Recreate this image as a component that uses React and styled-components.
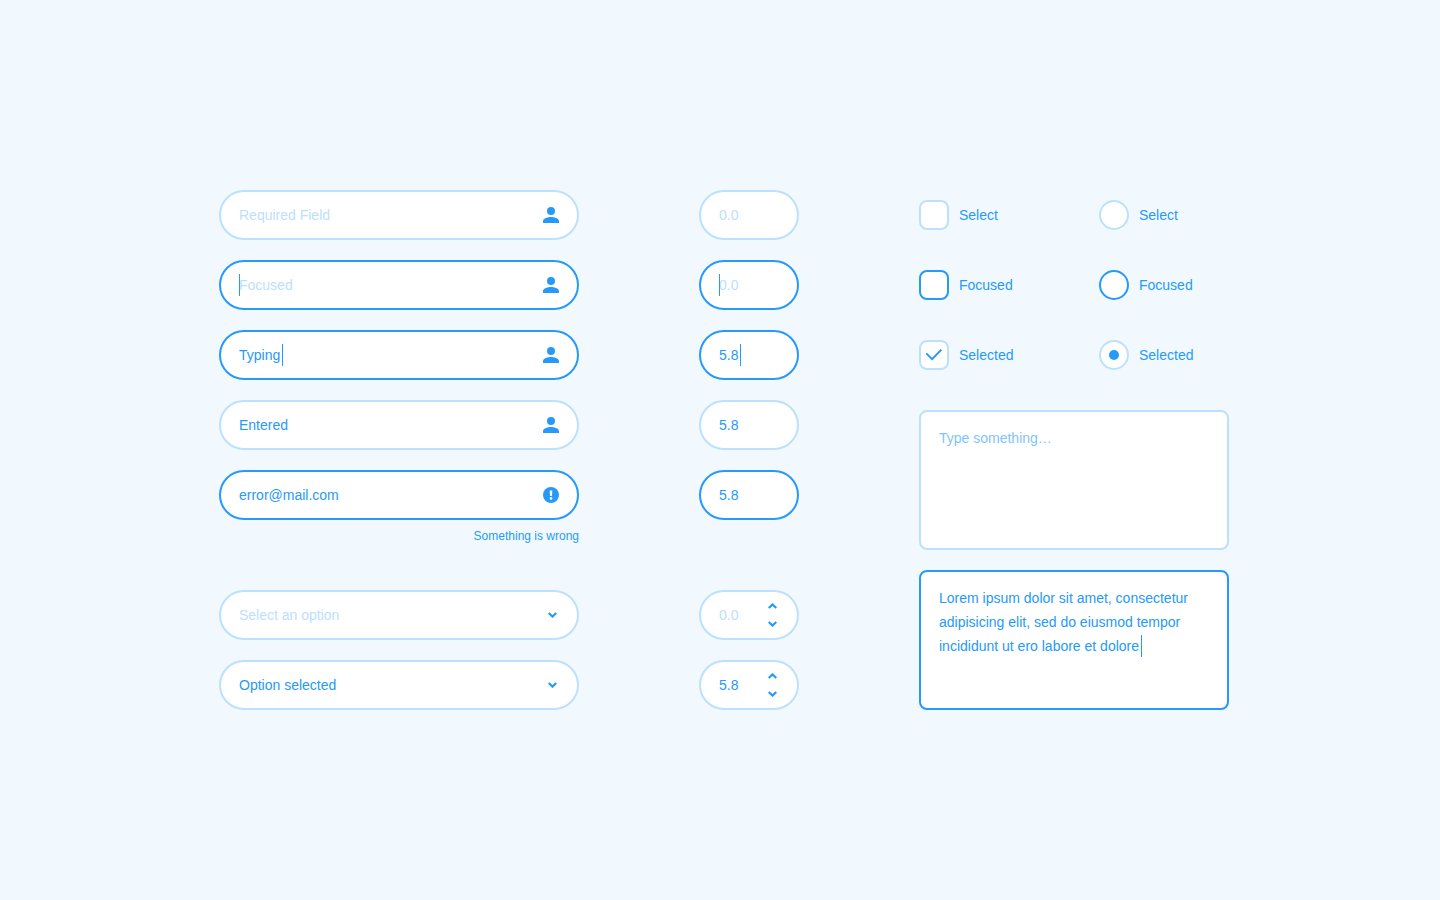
import React from 'react';
import styled, { createGlobalStyle, css } from 'styled-components';

const color = {
  page: '#f1f9ff',
  surface: '#ffffff',
  primary: '#2699fb',
  muted: '#bce0fd',
  hint: '#7fc4fd',
};

const GlobalStyle = createGlobalStyle`
  *, *::before, *::after { box-sizing: border-box; }
  body {
    margin: 0;
    background: ${color.page};
    color: ${color.primary};
    font: 14px/24px "Liberation Sans", Arial, sans-serif;
  }
  button, input, select, textarea { font: inherit; color: inherit; margin: 0; outline: none; }
`;

const Page = styled.main`
  min-height: 100vh;
  display: flex;
  align-items: center;
  justify-content: center;
  padding: 20px 20px 20px 28px;
`;

const Board = styled.form`
  display: grid;
  grid-template-columns: minmax(0, 360px) 100px minmax(0, 310px);
  column-gap: 120px;
  width: 100%;
  max-width: 1010px;
`;

const Column = styled.section`
  display: flex;
  flex-direction: column;
  justify-content: space-between;
  row-gap: 40px;
`;

const Stack = styled.div`
  display: flex;
  flex-direction: column;
  gap: 20px;
`;

const outline = css`
  background: ${color.surface};
  border: 2px solid ${({ $active }) => ($active ? color.primary : color.muted)};
`;

const Pill = styled.div`
  ${outline}
  position: relative;
  display: flex;
  align-items: center;
  height: 50px;
  padding: 0 18px;
  border-radius: 25px;
`;

const TextInput = styled.input`
  flex: 1;
  min-width: 0;
  height: 24px;
  padding: 0;
  border: 0;
  background: transparent;
  &::placeholder { color: ${color.muted}; opacity: 1; }
`;

const Caret = styled.span`
  position: absolute;
  top: ${({ $top }) => $top}px;
  left: ${({ $left }) => $left}px;
  width: 1px;
  height: 22px;
  background: ${color.primary};
`;

const Icon = styled.svg`
  display: block;
  flex: none;
`;

const ErrorText = styled.p`
  margin: -12px 0 0;
  font-size: 12px;
  line-height: 16px;
  text-align: right;
`;

const SelectPill = styled(Pill)`
  padding: 0;
`;

const Select = styled.select`
  appearance: none;
  width: 100%;
  height: 100%;
  padding: 0 36px 0 18px;
  border: 0;
  border-radius: 25px;
  background: transparent;
  color: ${({ $empty }) => ($empty ? color.muted : color.primary)};
`;

const SelectArrow = styled.span`
  position: absolute;
  top: 20px;
  right: 20px;
  pointer-events: none;
`;

const StepPill = styled(Pill)`
  padding-right: 20px;
`;

const Stepper = styled.div`
  display: flex;
  flex-direction: column;
  gap: 12px;
`;

const StepButton = styled.button`
  padding: 0;
  border: 0;
  background: transparent;
`;

const Options = styled.div`
  display: grid;
  grid-template-columns: 180px 1fr;
  row-gap: 40px;
  padding-top: 10px;
`;

const Option = styled.label`
  display: flex;
  align-items: center;
  gap: 10px;
  height: 30px;
`;

const Tick = styled.span`
  position: relative;
  display: flex;
`;

const Toggle = styled.input`
  ${outline}
  appearance: none;
  display: grid;
  place-items: center;
  width: 30px;
  height: 30px;
  border-radius: 8px;

  &[type='radio'] { border-radius: 50%; }
  &[type='radio']:checked::before {
    content: '';
    width: 10px;
    height: 10px;
    border-radius: 50%;
    background: ${color.primary};
  }
  & + svg { position: absolute; inset: 0; display: none; pointer-events: none; }
  &:checked + svg { display: block; }
`;

const AreaWrap = styled.div`
  position: relative;
  display: flex;
`;

const Area = styled.textarea`
  ${outline}
  width: 100%;
  height: 140px;
  padding: 14px 18px;
  border-radius: 8px;
  resize: none;
  &::placeholder { color: ${color.hint}; opacity: 1; }
`;

const PersonIcon = () => (
  <Icon width="16" height="16" viewBox="0 0 16 16" fill={color.primary} aria-hidden="true">
    <path d="M8 8a4 4 0 1 0 0-8 4 4 0 0 0 0 8zm0 2c-2.67 0-8 1.34-8 4v2h16v-2c0-2.66-5.33-4-8-4z" />
  </Icon>
);

const AlertIcon = () => (
  <Icon width="16" height="16" viewBox="0 0 16 16" aria-hidden="true">
    <circle cx="8" cy="8" r="8" fill={color.primary} />
    <path d="M6.7 3.6h2.6L9 9.1H7z" fill={color.surface} />
    <circle cx="8" cy="11.4" r="1.3" fill={color.surface} />
  </Icon>
);

const Chevron = ({ up }) => (
  <Icon width="9" height="6" viewBox="0 0 9 6" fill="none" stroke={color.primary} strokeWidth="2.2" aria-hidden="true">
    <path d={up ? 'M0.7 5 4.5 1.4 8.3 5' : 'M0.7 1 4.5 4.6 8.3 1'} />
  </Icon>
);

const CheckMark = () => (
  <svg width="30" height="30" viewBox="0 0 30 30" fill="none" stroke={color.primary} strokeWidth="2" aria-hidden="true">
    <path d="M7.3 13.4 13.1 19.1 22.4 9.6" />
  </svg>
);

const Field = ({ label, value, placeholder, active, caret, icon }) => (
  <Pill $active={active}>
    <TextInput aria-label={label} defaultValue={value} placeholder={placeholder} />
    {caret !== undefined && <Caret $top={12} $left={caret} />}
    {icon}
  </Pill>
);

const SelectField = ({ label, text, empty }) => (
  <SelectPill>
    <Select aria-label={label} $empty={empty}>
      <option>{text}</option>
    </Select>
    <SelectArrow><Chevron /></SelectArrow>
  </SelectPill>
);

const StepField = ({ label, value, placeholder }) => (
  <StepPill>
    <TextInput aria-label={label} inputMode="decimal" defaultValue={value} placeholder={placeholder} />
    <Stepper>
      <StepButton type="button" aria-label="Increase"><Chevron up /></StepButton>
      <StepButton type="button" aria-label="Decrease"><Chevron /></StepButton>
    </Stepper>
  </StepPill>
);

const options = [
  { text: 'Select' },
  { text: 'Focused', active: true },
  { text: 'Selected', checked: true },
];

export default function App() {
  return (
    <>
      <GlobalStyle />
      <Page>
        <Board>
          <Column>
            <Stack>
              <Field label="Required field" placeholder="Required Field" icon={<PersonIcon />} />
              <Field label="Focused field" placeholder="Focused" active caret={18} icon={<PersonIcon />} />
              <Field label="Typing field" value="Typing" active caret={61} icon={<PersonIcon />} />
              <Field label="Entered field" value="Entered" icon={<PersonIcon />} />
              <Field label="Email" value="error@mail.com" active icon={<AlertIcon />} />
              <ErrorText>Something is wrong</ErrorText>
            </Stack>
            <Stack>
              <SelectField label="Empty select" text="Select an option" empty />
              <SelectField label="Filled select" text="Option selected" />
            </Stack>
          </Column>

          <Column>
            <Stack>
              <Field label="Number" placeholder="0.0" />
              <Field label="Number, focused" placeholder="0.0" active caret={18} />
              <Field label="Number, typing" value="5.8" active caret={39} />
              <Field label="Number, entered" value="5.8" />
              <Field label="Number, error" value="5.8" active />
            </Stack>
            <Stack>
              <StepField label="Step number" placeholder="0.0" />
              <StepField label="Step number, entered" value="5.8" />
            </Stack>
          </Column>

          <Column>
            <Options>
              {options.map(({ text, active, checked }) => (
                <React.Fragment key={text}>
                  <Option>
                    <Tick>
                      <Toggle type="checkbox" $active={active} defaultChecked={checked} />
                      <CheckMark />
                    </Tick>
                    {text}
                  </Option>
                  <Option>
                    <Toggle type="radio" name="choice" $active={active} defaultChecked={checked} />
                    {text}
                  </Option>
                </React.Fragment>
              ))}
            </Options>
            <Stack>
              <AreaWrap>
                <Area aria-label="Message" placeholder="Type something…" />
              </AreaWrap>
              <AreaWrap>
                <Area
                  aria-label="Message, typing"
                  $active
                  spellCheck={false}
                  defaultValue="Lorem ipsum dolor sit amet, consectetur adipisicing elit, sed do eiusmod tempor incididunt ut ero labore et dolore"
                />
                <Caret $top={65} $left={222} />
              </AreaWrap>
            </Stack>
          </Column>
        </Board>
      </Page>
    </>
  );
}
